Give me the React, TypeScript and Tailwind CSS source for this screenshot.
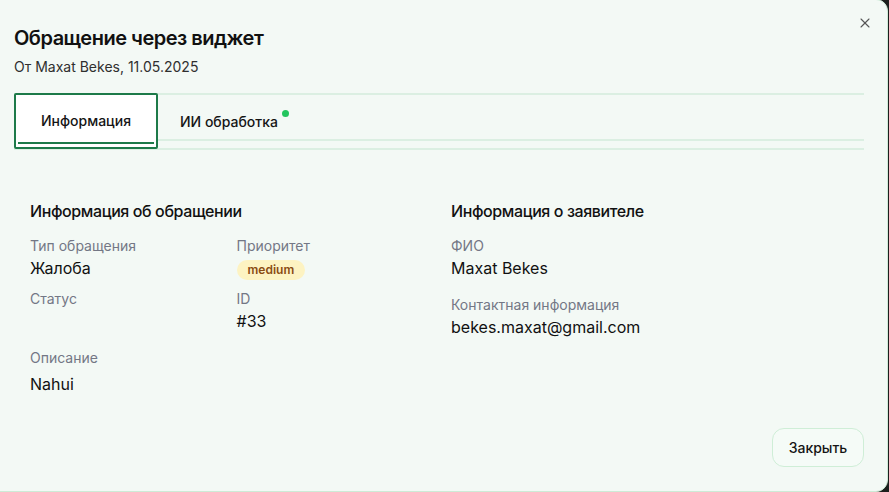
import { X } from 'lucide-react'

function Field({ label, children }: { label: string; children?: React.ReactNode }) {
  return (
    <div>
      <div className="text-sm leading-5 text-[#737785]">{label}</div>
      {children}
    </div>
  )
}

function App() {
  return (
    <main
      className="h-[492px] w-full overflow-hidden bg-[#1c1f1d]"
      style={{ fontFamily: 'Inter, "Noto Sans", sans-serif' }}
    >
      <div className="relative -mt-px ml-[-12px] flex h-[493px] w-[900px] flex-col rounded-xl border border-[#cdebd6] bg-[#f3f9f5] pl-[25px] pr-[23px] pb-6 pt-[24px]">
        <button className="absolute right-[14px] top-[15px] text-[#555]">
          <X size={16} strokeWidth={1.6} />
        </button>

        <h2 className="text-xl font-semibold leading-7 tracking-tight text-[#111]">Обращение через виджет</h2>
        <p className="mt-[5px] text-sm leading-5 text-[#2f2f2f]">От Maxat Bekes, 11.05.2025</p>

        <div className="mt-4">
          <div className="flex h-[48px] border-y-2 border-[#dbefe2]">
            <button className="-mt-[2px] flex h-[56px] w-[144px] flex-col rounded-[2px] border-2 border-[#1d7a49] bg-white px-[2px]">
              <span className="flex flex-1 items-center justify-center pt-[4px] text-sm font-medium text-[#151515]">
                Информация
              </span>
              <span className="mb-[3px] h-[2px] w-full bg-[#1d7a49]" />
            </button>
            <button className="relative -mt-[2px] flex h-[56px] items-center pl-[22px] pr-4 pt-[2px] text-sm font-medium text-[#151515]">
              ИИ обработка
              <span className="absolute right-[5px] top-[17px] h-[7px] w-[7px] rounded-full bg-[#22c55e]" />
            </button>
          </div>
          <div className="mt-[7px] h-[2px] bg-[#dbefe2]" />
        </div>

        <div className="mt-[49px] grid grid-cols-2 gap-x-6 px-4 text-[#111]">
          <section>
            <h3 className="text-base font-medium leading-6 tracking-tight">Информация об обращении</h3>
            <div className="mt-[13px] grid grid-cols-2 gap-x-4 gap-y-[9px]">
              <Field label="Тип обращения">
                <div className="text-base leading-6">Жалоба</div>
              </Field>
              <Field label="Приоритет">
                <span className="mt-[3px] inline-flex h-5 items-center rounded-full bg-[#fdf3c2] px-[11px] text-xs font-semibold text-[#8a4b12]">
                  medium
                </span>
              </Field>
              <Field label="Статус" />
              <Field label="ID">
                <div className="text-base leading-6">#33</div>
              </Field>
            </div>
            <div className="mt-[15px]">
              <Field label="Описание">
                <div className="mt-1 text-base leading-6">Nahui</div>
              </Field>
            </div>
          </section>

          <section>
            <h3 className="text-base font-medium leading-6 tracking-tight">Информация о заявителе</h3>
            <div className="mt-[13px] flex flex-col gap-[15px]">
              <Field label="ФИО">
                <div className="text-base leading-6">Maxat Bekes</div>
              </Field>
              <Field label="Контактная информация">
                <div className="text-base leading-6">bekes.maxat@gmail.com</div>
              </Field>
            </div>
          </section>
        </div>

        <div className="mt-auto flex justify-end">
          <button className="h-[39px] w-[92px] rounded-xl border border-[#cfeed7] bg-[#f5fbf7] text-sm font-medium text-[#151515]">
            Закрыть
          </button>
        </div>
      </div>
    </main>
  )
}

export default App
